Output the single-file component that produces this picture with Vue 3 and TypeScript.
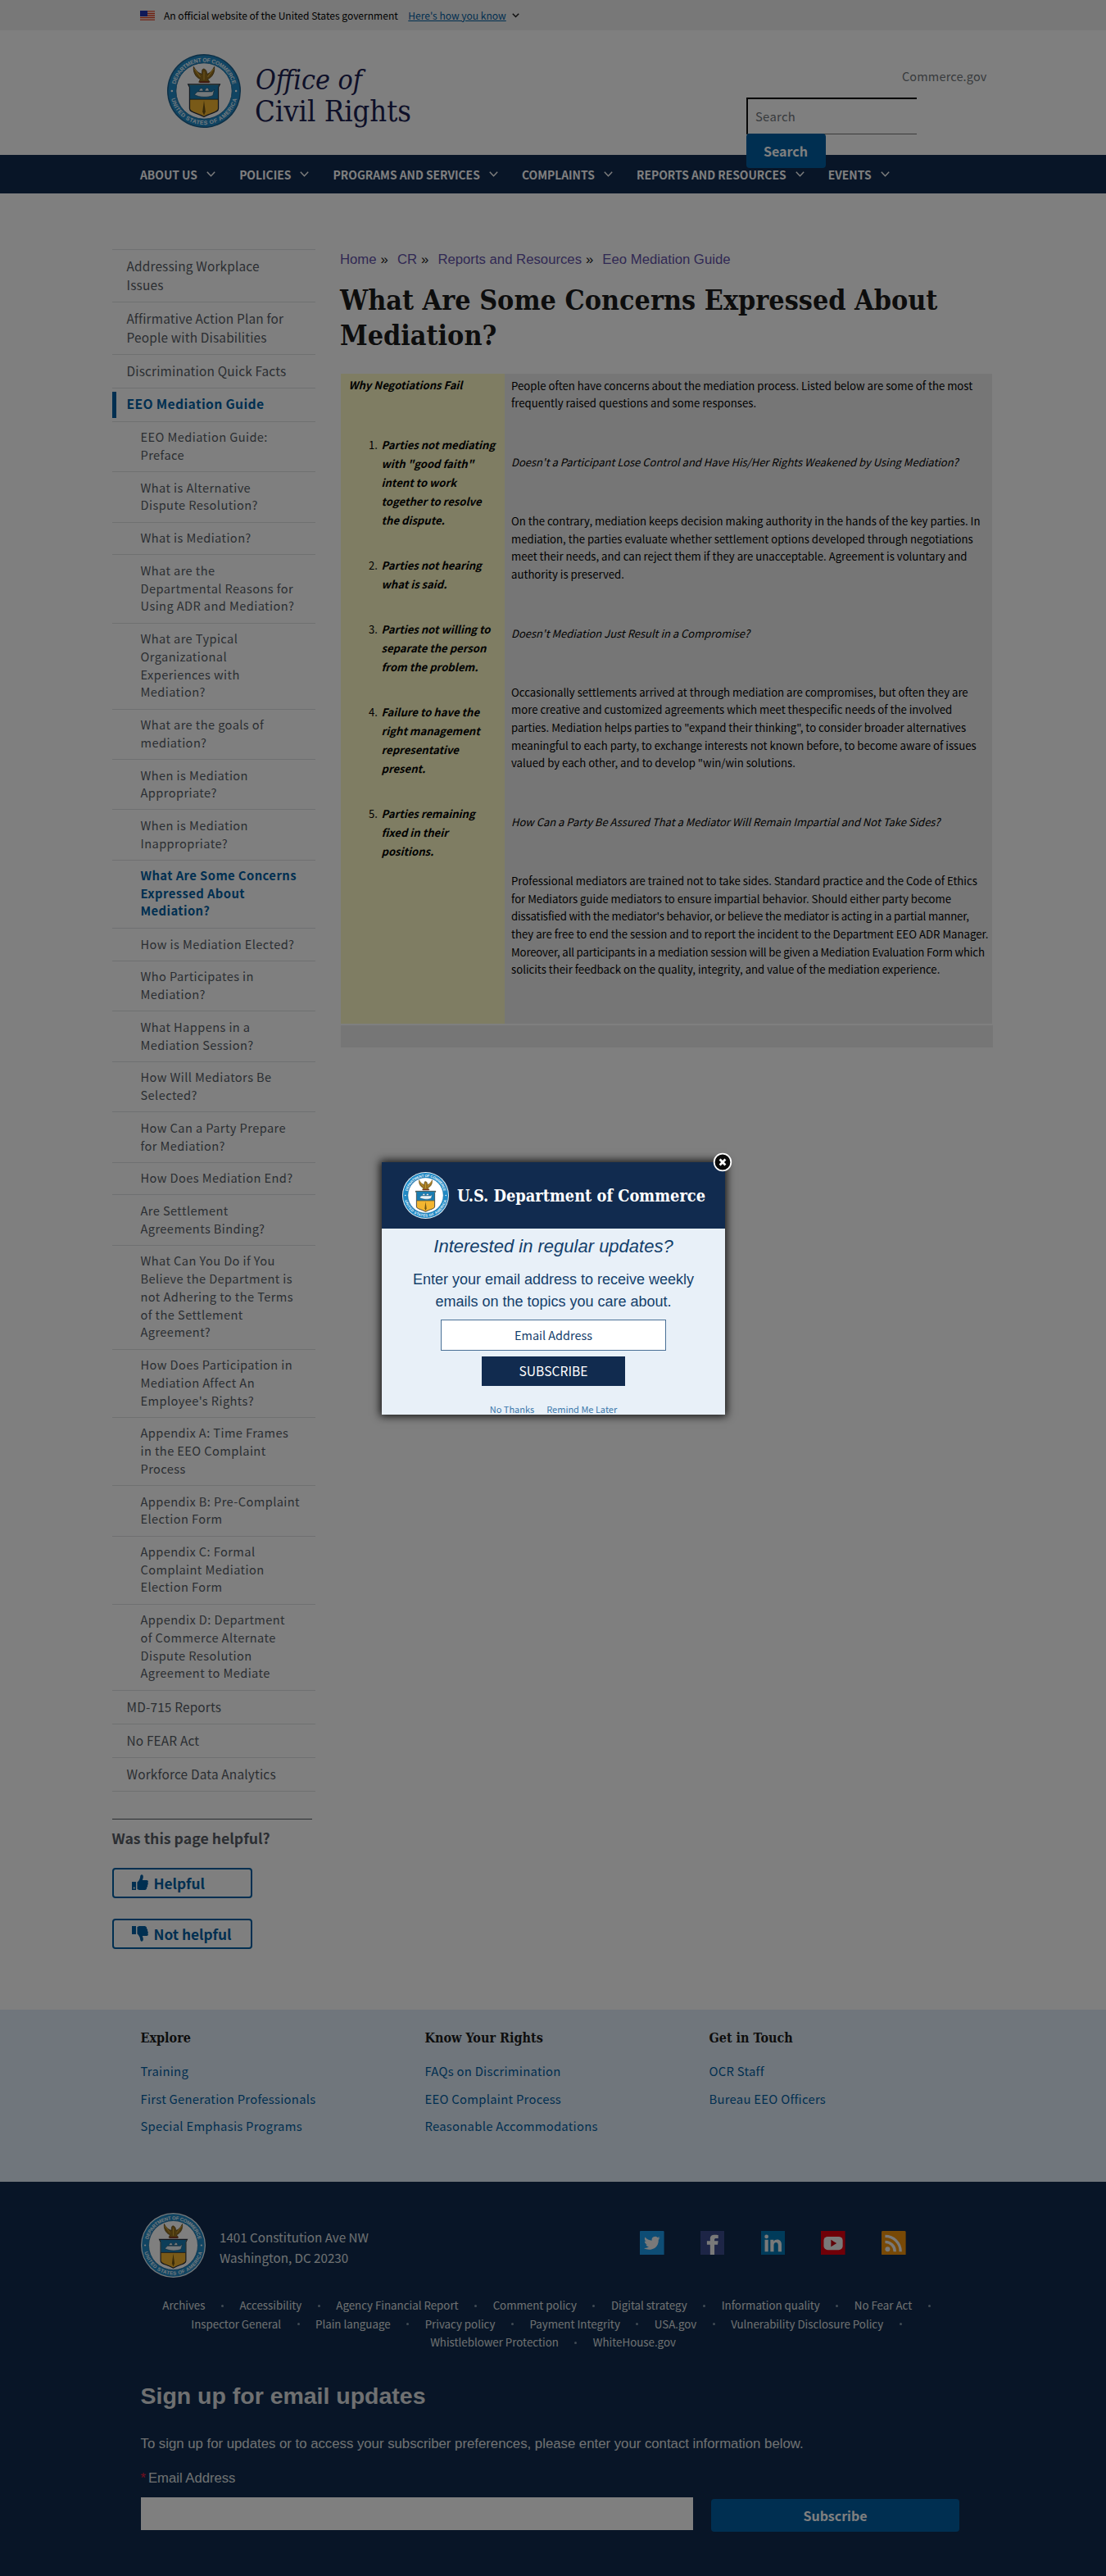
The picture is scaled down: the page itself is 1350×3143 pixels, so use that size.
<script setup lang="ts">
import { h } from 'vue'

interface SideItem { label: string; sub?: boolean; active?: boolean; bar?: boolean }

const navItems: string[] = ['ABOUT US', 'POLICIES', 'PROGRAMS AND SERVICES', 'COMPLAINTS', 'REPORTS AND RESOURCES', 'EVENTS']

const s = (label: string): SideItem => ({ label, sub: true })
const sideItems: SideItem[] = [
  { label: 'Addressing Workplace\nIssues' },
  { label: 'Affirmative Action Plan for\nPeople with Disabilities' },
  { label: 'Discrimination Quick Facts' },
  { label: 'EEO Mediation Guide', active: true, bar: true },
  s('EEO Mediation Guide:\nPreface'),
  s('What is Alternative\nDispute Resolution?'),
  s('What is Mediation?'),
  s('What are the\nDepartmental Reasons for\nUsing ADR and Mediation?'),
  s('What are Typical\nOrganizational\nExperiences with\nMediation?'),
  s('What are the goals of\nmediation?'),
  s('When is Mediation\nAppropriate?'),
  s('When is Mediation\nInappropriate?'),
  { label: 'What Are Some Concerns\nExpressed About\nMediation?', sub: true, active: true },
  s('How is Mediation Elected?'),
  s('Who Participates in\nMediation?'),
  s('What Happens in a\nMediation Session?'),
  s('How Will Mediators Be\nSelected?'),
  s('How Can a Party Prepare\nfor Mediation?'),
  s('How Does Mediation End?'),
  s('Are Settlement\nAgreements Binding?'),
  s('What Can You Do if You\nBelieve the Department is\nnot Adhering to the Terms\nof the Settlement\nAgreement?'),
  s("How Does Participation in\nMediation Affect An\nEmployee's Rights?"),
  s('Appendix A: Time Frames\nin the EEO Complaint\nProcess'),
  s('Appendix B: Pre-Complaint\nElection Form'),
  s('Appendix C: Formal\nComplaint Mediation\nElection Form'),
  s('Appendix D: Department\nof Commerce Alternate\nDispute Resolution\nAgreement to Mediate'),
  { label: 'MD-715 Reports' },
  { label: 'No FEAR Act' },
  { label: 'Workforce Data Analytics' },
]

const reasons: string[] = [
  'Parties not mediating\nwith "good faith"\nintent to work\ntogether to resolve\nthe dispute.',
  'Parties not hearing\nwhat is said.',
  'Parties not willing to\nseparate the person\nfrom the problem.',
  'Failure to have the\nright management\nrepresentative\npresent.',
  'Parties remaining\nfixed in their\npositions.',
]

interface Line { text: string; tight?: boolean }
interface Paragraph { lines: Line[]; q?: boolean }

const para = (...lines: string[]): Paragraph => ({ lines: lines.map(text => ({ text, tight: text.length > 96 })) })
const question = (text: string): Paragraph => ({ lines: [{ text }], q: true })

const paragraphs: Paragraph[] = [
  para('People often have concerns about the mediation process. Listed below are some of the most', 'frequently raised questions and some responses.'),
  question("Doesn't a Participant Lose Control and Have His/Her Rights Weakened by Using Mediation?"),
  para(
    'On the contrary, mediation keeps decision making authority in the hands of the key parties. In',
    'mediation, the parties evaluate whether settlement options developed through negotiations',
    'meet their needs, and can reject them if they are unacceptable. Agreement is voluntary and',
    'authority is preserved.',
  ),
  question("Doesn't Mediation Just Result in a Compromise?"),
  para(
    'Occasionally settlements arrived at through mediation are compromises, but often they are',
    'more creative and customized agreements which meet thespecific needs of the involved',
    'parties. Mediation helps parties to "expand their thinking", to consider broader alternatives',
    'meaningful to each party, to exchange interests not known before, to become aware of issues',
    'valued by each other, and to develop "win/win solutions.',
  ),
  question('How Can a Party Be Assured That a Mediator Will Remain Impartial and Not Take Sides?'),
  para(
    'Professional mediators are trained not to take sides. Standard practice and the Code of Ethics',
    'for Mediators guide mediators to ensure impartial behavior. Should either party become',
    "dissatisfied with the mediator's behavior, or believe the mediator is acting in a partial manner,",
    'they are free to end the session and to report the incident to the Department EEO ADR Manager.',
    'Moreover, all participants in a mediation session will be given a Mediation Evaluation Form which',
    'solicits their feedback on the quality, integrity, and value of the mediation experience.',
  ),
]

const footerCols: { title: string; links: string[] }[] = [
  { title: 'Explore', links: ['Training', 'First Generation Professionals', 'Special Emphasis Programs'] },
  { title: 'Know Your Rights', links: ['FAQs on Discrimination', 'EEO Complaint Process', 'Reasonable Accommodations'] },
  { title: 'Get in Touch', links: ['OCR Staff', 'Bureau EEO Officers'] },
]

const policyRows: string[][] = [
  ['Archives', 'Accessibility', 'Agency Financial Report', 'Comment policy', 'Digital strategy', 'Information quality', 'No Fear Act'],
  ['Inspector General', 'Plain language', 'Privacy policy', 'Payment Integrity', 'USA.gov', 'Vulnerability Disclosure Policy'],
  ['Whistleblower Protection', 'WhiteHouse.gov'],
]

const crumbs: string[] = ['Home', 'CR', 'Reports and Resources', 'Eeo Mediation Guide']

// Department seal: lettered ring, eagle and shield with ship and lighthouse.
const sealText = 'font-family="Liberation Sans, sans-serif" font-weight="bold" font-size="7.6" fill="#e8f4fb" text-anchor="middle"'
const sealMarkup = (rim: string): string => `
  <path id="arcTop" d="M 10.5 50 A 39.5 39.5 0 0 1 89.5 50" fill="none" />
  <path id="arcBottom" d="M 4.3 50 A 45.7 45.7 0 0 0 95.7 50" fill="none" />
  <circle cx="50" cy="50" r="50" fill="${rim}" />
  <circle cx="50" cy="50" r="48.4" fill="#2088c4" />
  <circle cx="50" cy="50" r="38" fill="#fff" stroke="#1a6a9c" stroke-width="1" />
  <text ${sealText}><textPath href="#arcTop" startOffset="50%" textLength="106">DEPARTMENT OF COMMERCE</textPath></text>
  <text ${sealText}><textPath href="#arcBottom" startOffset="50%" textLength="122">UNITED STATES OF AMERICA</textPath></text>
  <circle cx="6.5" cy="50" r="1.4" fill="#fff" /><circle cx="93.5" cy="50" r="1.4" fill="#fff" />
  <path d="M36 17 C35 24 38 31 45 34 L43 38 H58 L55 34 C62 31 65 24 64 17 C61 23 58 26 54 27 C54 24 53 21 50 20 C47 20 47 23 47.5 27 C43 26 39 23 36 17 Z" fill="#97701f" stroke="#4f3c12" stroke-width=".8" />
  <path d="M37 20 L45 31 M63 20 L55 31 M50 24 V35" stroke="#d8a93b" stroke-width="1.2" />
  <path d="M44 38 H57" stroke="#7d2a1c" stroke-width="2" />
  <path d="M28.5 41 H71.5 L69.5 45 V74 C69.5 79 61 79 50 85 C39 79 30.5 79 30.5 74 V45 Z" fill="#f2b530" stroke="#1f2937" stroke-width="1.4" />
  <path d="M29.5 41.7 H70.5 L69 45 V61 H31 V45 Z" fill="#1a7db3" />
  <path d="M37 55 L41 51 H61 L64 48 L62 56 C56 59 44 59 37 55 Z M43 50 C45 45 48 45 49 50 Z M51 50 C53 44 56 45 57 50 Z" fill="#e8f2f7" stroke="#123a55" stroke-width=".6" />
  <path d="M31 61.3 H69" stroke="#2b2f33" stroke-width="1" />
  <path d="M50 63 L52 78 L50 83 L48 78 Z" fill="#6e5312" />`

const Seal = (props: { size: number; rim: string }) =>
  h('svg', { viewBox: '0 0 100 100', width: props.size, height: props.size, innerHTML: sealMarkup(props.rim) })
Seal.props = ['size', 'rim']
</script>

<template>
  <div class="page">
    <div class="banner">
      <svg class="flag" viewBox="0 0 18 12" width="18" height="12">
        <rect width="18" height="12" fill="#fff" />
        <path d="M0 .9H18M0 3.500H18M0 6H18M0 8.500H18M0 11.100H18" stroke="#db3e1f" stroke-width="1.400" />
        <rect width="9" height="7" fill="#1e33b1" />
      </svg>
      <span class="official">An official website of the United States government</span>
      <a class="know">Here's how you know</a>
      <svg class="bchev" width="9" height="6" viewBox="0 0 9 6"><path d="M.8 .8 L4.500 4.500 L8.200 .8" fill="none" stroke="#1b1b1b" stroke-width="1.500" /></svg>
    </div>

    <header class="header">
      <div class="logo">
        <Seal :size="90" rim="#1c5f8c" />
        <svg class="logo-text" width="196" height="90" viewBox="0 0 196 90">
          <text x="1" y="43" font-size="33" font-style="italic" textLength="130" lengthAdjust="spacingAndGlyphs">Office of</text>
          <text x="0" y="81.500" font-size="35" textLength="191" lengthAdjust="spacingAndGlyphs">Civil Rights</text>
        </svg>
      </div>
      <div class="tools">
        <a class="commerce">Commerce.gov</a>
        <div class="search-input">Search</div>
        <div class="search-btn">Search</div>
      </div>
    </header>

    <nav class="nav">
      <div v-for="n in navItems" :key="n" class="nav-item">
        <span>{{ n }}</span>
        <svg width="11" height="7" viewBox="0 0 11 7"><path d="M.8 .8 L5.500 5.700 L10.200 .8" fill="none" stroke="#fff" stroke-width="1.400" /></svg>
      </div>
    </nav>

    <main class="main">
      <aside class="side">
        <ul class="side-list">
          <li v-for="i in sideItems" :key="i.label" :class="{ sub: i.sub, active: i.active, bar: i.bar }">{{ i.label }}</li>
        </ul>
        <div class="helpful">
          <p>Was this page helpful?</p>
          <div class="hbtn">
            <svg width="20" height="20" viewBox="0 0 20 20"><path fill="#005ea2" d="M0 9h5v10H0zM6.500 18V9.500C8 8.500 9.500 6 10 4c.2-1.500.3-3.500 1.800-3.700C14 .2 14 3 13.600 4.500L12.800 7H18c2 0 2.300 2 1.300 3 .9.900.7 2.400-.4 3 .6 1 .2 2.300-.8 2.800.3 1.600-.6 2.700-2.200 3.200H10c-1.500 0-2.300-.6-3.500-1z" /><circle cx="2.700" cy="16.600" r="1" fill="#fff" /></svg>
            <span>Helpful</span>
          </div>
          <div class="hbtn">
            <svg width="20" height="20" viewBox="0 0 20 20"><path fill="#005ea2" d="M0 1h5v10H0zM6.500 2v8.500C8 11.500 9.500 14 10 16c.2 1.500.3 3.500 1.800 3.700 2.200.1 2.200-2.700 1.800-4.200L12.800 13H18c2 0 2.300-2 1.300-3 .9-.9.700-2.400-.4-3 .6-1 .2-2.300-.8-2.800.3-1.600-.6-2.700-2.200-3.200H10c-1.500 0-2.300.6-3.500 1z" /></svg>
            <span>Not helpful</span>
          </div>
        </div>
      </aside>

      <article class="content">
        <div class="crumbs">
          <template v-for="(c, i) in crumbs" :key="c"><a>{{ c }}</a><b v-if="i < crumbs.length - 1">»</b></template>
        </div>
        <h1>What Are Some Concerns Expressed About<br />Mediation?</h1>
        <div class="table">
          <div class="why">
            <p>Why Negotiations Fail</p>
            <ol>
              <li v-for="(r, i) in reasons" :key="r"><span class="num">{{ i + 1 }}.</span><span class="reason">{{ r }}</span></li>
            </ol>
          </div>
          <div class="text">
            <p v-for="(p, pi) in paragraphs" :key="pi" :class="{ q: p.q }">
              <span v-for="l in p.lines" :key="l.text" class="line" :class="{ tight: l.tight }">{{ l.text }}</span>
            </p>
          </div>
        </div>
        <div class="table-foot"></div>
      </article>
    </main>

    <section class="foot1">
      <div v-for="f in footerCols" :key="f.title" class="fcol">
        <h4>{{ f.title }}</h4>
        <a v-for="l in f.links" :key="l">{{ l }}</a>
      </div>
    </section>

    <footer class="foot2">
      <div class="org">
        <Seal :size="79" rim="#e9f1f5" />
        <p class="addr">1401 Constitution Ave NW<br />Washington, DC 20230</p>
        <div class="social">
          <svg viewBox="0 0 30 30"><rect width="30" height="30" rx="1" fill="#1d9bea" /><path fill="#f3f3f3" d="M25 8.700c-.7.300-1.500.6-2.300.7.800-.5 1.500-1.300 1.800-2.200-.8.500-1.700.8-2.600 1a4.100 4.100 0 0 0-7 3.700c-3.400-.2-6.400-1.800-8.400-4.300-1.100 1.900-.5 4.300 1.300 5.500-.7 0-1.300-.2-1.900-.5 0 2 1.400 3.700 3.300 4.100-.6.200-1.200.2-1.800.1.500 1.600 2 2.800 3.800 2.800A8.200 8.200 0 0 1 5 21.300c6 3.800 18.500 1.700 18.100-10.500.8-.6 1.400-1.300 1.900-2.100z" /></svg>
          <svg viewBox="0 0 30 30"><rect width="30" height="30" fill="#3b4a8c" /><path fill="#f3f3f3" d="M12 30V17H8v-4.500h4V9.500C12 6 14.200 4.700 17.500 4.700c1.500 0 3.500.1 4.500.3v4h-2.500c-1.600 0-2.200.6-2.200 1.900v1.600h4.600l-.6 4.500h-4V30z" /></svg>
          <svg viewBox="0 0 30 30"><rect width="30" height="30" fill="#0077b5" /><circle cx="6.700" cy="7" r="2.400" fill="#f3f3f3" /><path fill="#f3f3f3" d="M4.600 11h4.200v14.500H4.600zM11.500 11h4v2c2-3.500 9.500-3.300 9.800 3.200v9.300h-4.200v-8c0-4.500-5.300-4.200-5.400 0v8h-4.200z" /></svg>
          <svg viewBox="0 0 30 30"><rect width="30" height="30" fill="#e00010" /><rect x="3.500" y="7" width="23.500" height="16.500" rx="5" fill="#f3f3f3" /><path d="M12.500 11v8.500l7-4.200z" fill="#c00010" /></svg>
          <svg viewBox="0 0 30 30"><rect width="30" height="30" rx="1.500" fill="#f0920c" /><circle cx="7.500" cy="22.500" r="3" fill="#f3f3f3" /><path d="M4.500 13.500A12 12 0 0 1 16.500 25.500M4.500 6.500A19 19 0 0 1 23.500 25.500" fill="none" stroke="#f3f3f3" stroke-width="3.400" /></svg>
        </div>
      </div>
      <div class="policies">
        <div v-for="(r, ri) in policyRows" :key="ri" class="prow" :class="{ last: ri === 2 }">
          <template v-for="(p, pi) in r" :key="p"><span>{{ p }}</span><i v-if="ri < 2 || pi < r.length - 1"></i></template>
        </div>
      </div>
      <h2>Sign up for email updates</h2>
      <p class="lead">To sign up for updates or to access your subscriber preferences, please enter your contact information below.</p>
      <p class="label"><em>*</em>Email Address</p>
      <div class="signup"><div class="box"></div><div class="subscribe">Subscribe</div></div>
    </footer>

    <div class="overlay"></div>

    <div class="modal">
      <div class="modal-in">
        <div class="mhead">
          <Seal :size="57" rim="#e9f1f5" />
          <svg class="mtitle" width="306" height="40" viewBox="0 0 306 40"><text x="0" y="27" font-size="20" font-weight="bold" textLength="303" lengthAdjust="spacingAndGlyphs">U.S. Department of Commerce</text></svg>
        </div>
        <p class="mi">Interested in regular updates?</p>
        <p class="me">Enter your email address to receive weekly<br />emails on the topics you care about.</p>
        <div class="minput">Email Address</div>
        <div class="mbtn">SUBSCRIBE</div>
        <div class="mlinks"><a>No Thanks</a><a>Remind Me Later</a></div>
      </div>
      <svg class="close" width="24" height="24" viewBox="0 0 24 24"><circle cx="12" cy="12" r="10.300" fill="#0a0a0a" stroke="#fff" stroke-width="1.800" /><path d="M8.600 8.600 L15.400 15.400 M15.400 8.600 L8.600 15.400" stroke="#fff" stroke-width="2.800" /></svg>
    </div>
  </div>
</template>

<style>
body { margin: 0; background: #fff; }
</style>

<style scoped>
.page { position: relative; width: 1350px; height: 3143px; overflow: hidden; background: #fff; color: #1b1b1b; font-family: "Noto Sans CJK SC", "Noto Sans", sans-serif; font-size: 15px; }
.page p, .page h1, .page h2, .page h4, .page ul, .page ol { margin: 0; padding: 0; list-style: none; }

.banner { box-sizing: border-box; height: 37px; background: #f0f0f0; display: flex; align-items: center; padding-left: 171px; }
.official { margin-left: 11px; font-size: 12.050px; color: #000; }
.know { margin-left: 12.500px; font-size: 12.050px; color: #005ea2; text-decoration: underline; }
.bchev { margin-left: 7px; }

.header { position: relative; z-index: 1; height: 152px; display: flex; justify-content: space-between; box-sizing: border-box; padding: 29px 0 0 204px; }
.logo { display: flex; height: 90px; gap: 16.500px; }
.logo-text text { font-family: "DejaVu Serif Condensed", "DejaVu Serif", serif; fill: #1b2050; }
.tools { width: 294px; margin-right: 145.500px; display: flex; flex-direction: column; }
.commerce { align-self: flex-end; margin-top: 15px; line-height: 24px; font-size: 14.500px; letter-spacing: .15px; color: #71767a; }
.search-input { box-sizing: border-box; width: 208px; height: 46px; margin-top: 14px; border-top: 2px solid #000; border-left: 2px solid #111; border-bottom: 1.500px solid #767676; padding-left: 9.500px; font-size: 14.800px; letter-spacing: .3px; line-height: 42px; color: #71767a; }
.search-btn { box-sizing: border-box; width: 97px; height: 42px; margin-top: -1px; border-radius: 4px; background: #005ea2; color: #fff; font-weight: bold; font-size: 16px; line-height: 42px; text-align: center; }

.nav { height: 47px; background: #112b4f; display: flex; padding-left: 171px; gap: 29.200px; align-items: center; color: #fff; font-weight: bold; font-size: 13.850px; }
.nav-item { display: flex; align-items: center; gap: 11px; white-space: nowrap; }

.main { display: flex; height: 2216px; }
.side { width: 248px; margin-left: 136.500px; padding-top: 68px; }
.side-list { border-bottom: 1px solid #dfe1e2; }
.side-list li { border-top: 1px solid #dfe1e2; padding: 8px 0 9px 18px; font-size: 15.400px; letter-spacing: .17px; line-height: 22.950px; color: #565c65; white-space: pre; }
.side-list li.sub { padding: 7.500px 0 9.500px 35px; font-size: 14.600px; letter-spacing: .42px; line-height: 21.730px; }
.side-list li.active { color: #005ea2; font-weight: bold; letter-spacing: .35px; font-size: 15.700px; }
.side-list li.sub.active { font-size: 14.800px; letter-spacing: .42px; padding-top: 7px; padding-bottom: 10px; }
.side-list li.bar { background: linear-gradient(#005ea2, #005ea2) 0 4px / 5px 32px no-repeat; }
.helpful { width: 244.500px; margin-top: 33px; border-top: 1.500px solid #565c65; color: #565c65; }
.helpful p { margin-top: 10px; font-size: 17.700px; line-height: 24px; font-weight: bold; }
.page .helpful p { margin-top: 10px; }
.hbtn { box-sizing: border-box; width: 171px; height: 37px; border: 2px solid #005ea2; border-radius: 4px; margin-top: 25px; padding-left: 22px; display: flex; align-items: center; gap: 7px; color: #005ea2; font-weight: bold; font-size: 17.300px; }

.content { margin-left: 30.500px; width: 800px; padding-top: 70.500px; }
.crumbs { font-family: "Liberation Sans", sans-serif; font-size: 16.730px; line-height: 20px; height: 20px; display: flex; color: #6352a8; white-space: nowrap; }
.crumbs b { font-weight: 500; color: #1b1b1b; margin: 0 11px 0 5px; }
.page h1 { margin-top: 18.500px; font-family: "DejaVu Serif Condensed", serif; font-size: 33.800px; line-height: 42.500px; white-space: nowrap; }
.table { display: flex; margin: 26px 0 0 1px; height: 792.500px; width: 795px; }
.why { flex: none; width: 200px; background: #fffbc6; font-size: 13.100px; color: #000; }
.page .why p { font-weight: bold; font-style: italic; padding: 2px 0 0 9.500px; line-height: 23px; }
.page .why ol { padding-top: 50px; }
.why li { display: flex; margin-bottom: 32px; line-height: 23px; }
.num { width: 45px; text-align: right; margin-right: 4.500px; }
.reason { white-space: pre; font-weight: bold; font-style: italic; }
.text { flex: 1; background: #ececec; padding: 3.500px 0 0 8px; font-size: 13.180px; line-height: 21.600px; color: #000; }
.page .text p { margin-bottom: 50.400px; }
.line { display: block; white-space: pre; }
.line.tight { letter-spacing: -.15px; }
.text .q { font-style: italic; font-size: 13px; }
.table-foot { margin: 2px 0 0 1px; width: 796px; height: 27px; background: #ededed; }

.foot1 { box-sizing: border-box; height: 210px; background: #e1ecf8; padding: 23px 0 0 171.500px; display: flex; }
.fcol { width: 347px; display: flex; flex-direction: column; }
.fcol h4 { font-family: "DejaVu Serif Condensed", serif; font-size: 16px; line-height: 24px; }
.fcol h4 + a { margin-top: 11px; }
.fcol a { color: #005ea2; font-size: 14.800px; letter-spacing: .28px; line-height: 33.700px; }

.foot2 { box-sizing: border-box; height: 481px; background: #112b4f; padding: 38px 0 0 171.500px; color: #fff; }
.org { display: flex; height: 79px; }
.addr { width: 513px; font-size: 15.200px; line-height: 25px; color: #dfe1e2; }
.page .addr { margin: 17px 0 0 17.500px; }
.social { display: flex; gap: 44.200px; margin-top: 21.500px; height: 30px; }
.social svg { width: 29.600px; height: 29.600px; }
.policies { margin: 23px 0 0 -171.500px; color: #dfe1e2; font-size: 13.320px; line-height: 22.500px; }
.prow { display: flex; justify-content: center; align-items: center; height: 22.500px; padding-right: 16px; }
.prow.last { padding-right: 0; }
.prow i { width: 3px; height: 3px; border-radius: 50%; background: #8296a8; margin: 0 19.500px; }
.prow i:last-child { margin-right: 0; }
.page h2 { font: bold 28.470px/34px "Liberation Sans", sans-serif; color: #dfe1e2; margin-top: 36px; }
.page .lead { font: 16.750px/20px "Liberation Sans", sans-serif; color: #dfe1e2; margin-top: 32px; }
.page .label { font: 16.650px/20px "Liberation Sans", sans-serif; color: #dfe1e2; margin-top: 22px; display: flex; gap: 3px; }
.label em { color: #e31c3d; font-style: normal; }
.signup { display: flex; margin-top: 13px; }
.box { width: 674px; height: 40px; background: #fff; }
.subscribe { width: 303px; height: 40px; line-height: 40px; margin: 2px 0 0 22.500px; border-radius: 4px; background: #005ea2; text-align: center; font-weight: bold; font-size: 15.960px; }

.overlay { position: absolute; inset: 0; background: rgba(0, 0, 0, .5); z-index: 5; }
.modal { position: absolute; z-index: 6; left: 466px; top: 1418px; width: 419px; height: 308px; box-shadow: 0 0 10px 2px rgba(0, 0, 0, .85); }
.modal-in { height: 308px; overflow: hidden; background: #e8f0f8; text-align: center; color: #14406b; display: flex; flex-direction: column; align-items: center; }
.mhead { box-sizing: border-box; align-self: stretch; height: 81px; flex: none; background: #112b4f; display: flex; align-items: center; padding-left: 25px; }
.mtitle { margin-left: 10px; }
.mtitle text { font-family: "DejaVu Serif Condensed", serif; fill: #fff; }
.page .mi { font: italic 22px/28px "Liberation Sans", sans-serif; margin-top: 7.500px; }
.page .me { font: 18px/27px "Liberation Sans", sans-serif; margin-top: 13px; }
.minput { box-sizing: border-box; flex: none; width: 275px; height: 38px; border: 1px solid #4a7096; background: #fff; margin-top: 8.500px; line-height: 36px; font-size: 14.450px; }
.mbtn { flex: none; width: 175px; height: 36px; background: #112b4f; color: #fff; line-height: 36px; font-size: 15.650px; margin-top: 7px; }
.mlinks { display: flex; gap: 15px; font-size: 11px; line-height: 14px; margin-top: 21px; color: #3b78ab; }
.close { position: absolute; right: -9px; top: -12px; }
</style>
